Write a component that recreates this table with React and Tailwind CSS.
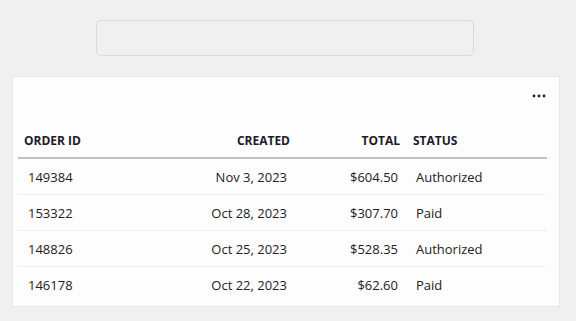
export default function App() {
  const rows = [
    ["149384", "Nov 3, 2023", "$604.50", "Authorized"],
    ["153322", "Oct 28, 2023", "$307.70", "Paid"],
    ["148826", "Oct 25, 2023", "$528.35", "Authorized"],
    ["146178", "Oct 22, 2023", "$62.60", "Paid"],
  ];
  return (
    <div className="w-[576px] h-[321px] bg-[#eff0ef] overflow-hidden" style={{ fontFamily: '"Open Sans", "Noto Sans", sans-serif' }}>
      <div className="pt-[20px] flex justify-center">
        <div className="ml-[-6px] w-[378px] h-[36px] rounded-[5px] border-[1.5px] border-[#d6dae1] bg-[#eff0ef]" />
      </div>
      <div className="mt-[20px] ml-[12px] w-[548px] h-[231px] bg-[#fdfdfd] border border-[#e6e7e6] flex flex-col">
        <div className="h-[46px] flex items-start justify-end pr-[13px] pt-[17px]">
          <svg width="14" height="4" viewBox="0 0 14 4">
            <circle cx="2" cy="2" r="1.4" fill="#1b1f2a" />
            <circle cx="7" cy="2" r="1.4" fill="#1b1f2a" />
            <circle cx="12" cy="2" r="1.4" fill="#1b1f2a" />
          </svg>
        </div>
        <div className="mx-[5px] w-[529px]">
          <div className="grid grid-cols-[132px_146px_110px_1fr] h-[36px] pt-[2px] items-center border-b-2 border-[#c2c2c2] text-[12px] font-bold text-[#1b1b2b]">
            <div className="pl-[6px]">ORDER ID</div>
            <div className="text-right pr-[6px]">CREATED</div>
            <div className="text-right pr-[6px]">TOTAL</div>
            <div className="pl-[7px]">STATUS</div>
          </div>
          {rows.map((r, i) => (
            <div
              key={r[0]}
              className={`grid grid-cols-[132px_146px_110px_1fr] h-[36px] pt-[2px] items-center text-[13px] text-[#222] ${i < rows.length - 1 ? "border-b border-[#efefef]" : ""}`}
            >
              <div className="pl-[10px]">{r[0]}</div>
              <div className="text-right pr-[9px]">{r[1]}</div>
              <div className="text-right pr-[8px]">{r[2]}</div>
              <div className="pl-[10px]">{r[3]}</div>
            </div>
          ))}
        </div>
      </div>
    </div>
  );
}
